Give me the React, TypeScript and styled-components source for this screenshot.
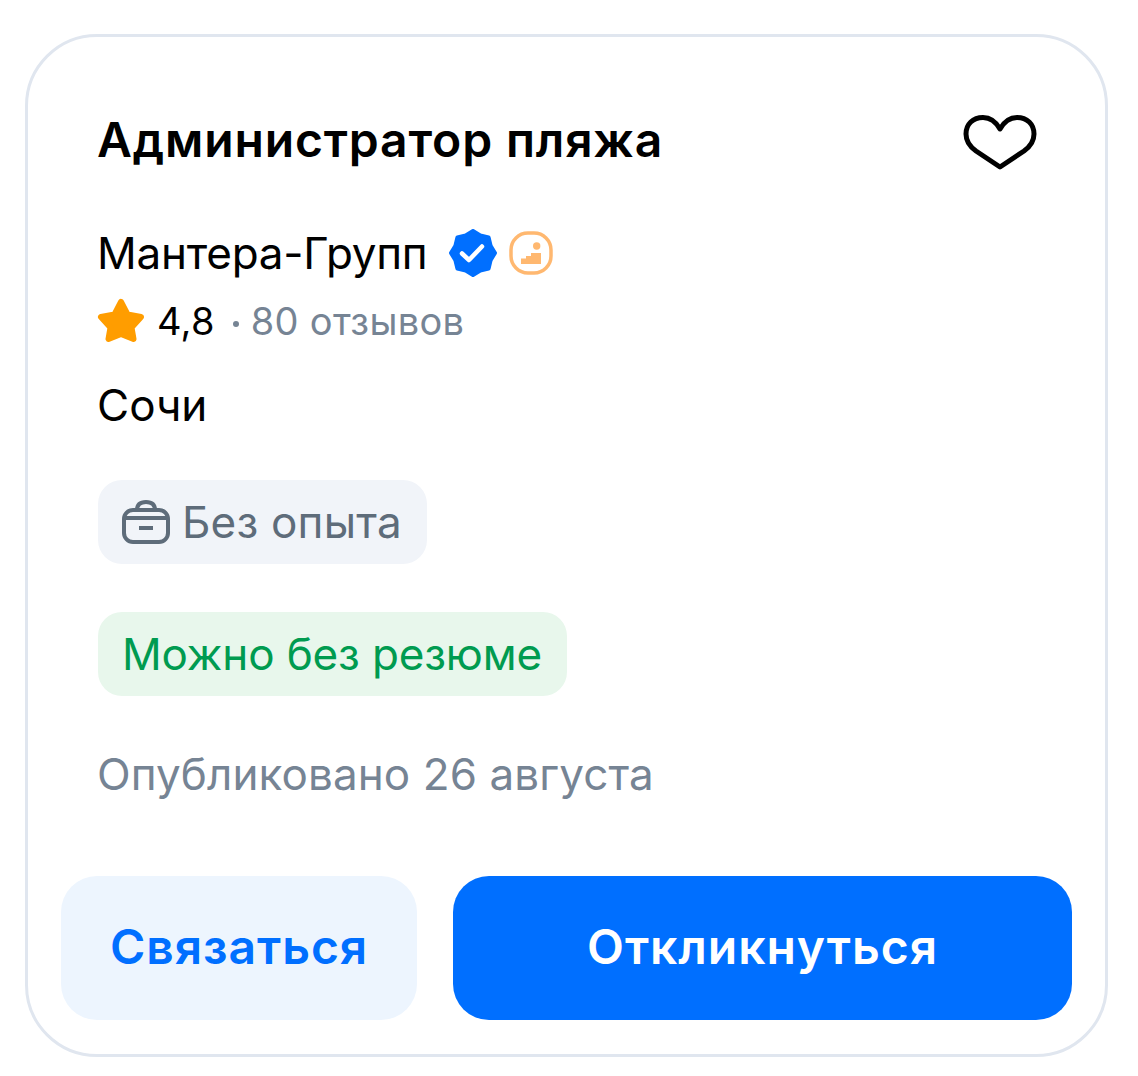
import styled, { createGlobalStyle } from 'styled-components';

const GlobalStyle = createGlobalStyle`
  html, body {
    margin: 0;
    background: #fff;
    font-family: Inter, "Liberation Sans", sans-serif;
  }
`;

const Page = styled.div`
  width: 1138px;
  height: 1076px;
  padding: 34px 0 0 25px;
  box-sizing: border-box;
`;

const Card = styled.article`
  width: 1083px;
  height: 1023px;
  box-sizing: border-box;
  border: 3px solid #e0e6ef;
  border-radius: 72px;
  padding: 71px 33px 34px;
  display: flex;
  flex-direction: column;
  justify-content: space-between;
`;

const Body = styled.div`
  padding: 0 35px 0 37px;
`;

const Header = styled.div`
  display: flex;
  justify-content: space-between;
  align-items: center;
  height: 64px;
`;

const Title = styled.h2`
  margin: 0 0 0 -1px;
  font-size: 48px;
  line-height: 64px;
  font-weight: 600;
  letter-spacing: 0.85px;
  color: #000;
`;

const Heart = styled.svg`
  margin-top: 4px;
`;

const Employer = styled.div`
  display: flex;
  align-items: center;
  margin: 57px 0 0 -1px;
  height: 48px;
  font-size: 44px;
  letter-spacing: -0.25px;
  color: #000;
`;

const Badges = styled.span`
  display: flex;
  align-items: center;
  gap: 12px;
  margin-left: 22px;
`;

const Rating = styled.div`
  display: flex;
  align-items: center;
  margin-top: 22px;
  height: 44px;
  font-size: 38px;
  letter-spacing: 0.3px;
`;

const Star = styled.svg`
  margin-left: -1px;
`;

const Score = styled.span`
  color: #000;
  margin-left: 12px;
`;

const Dot = styled.span`
  width: 6px;
  height: 6px;
  margin: 6px 12px 0 18px;
  border-radius: 50%;
  background: #768494;
`;

const Reviews = styled.span`
  color: #768494;
`;

const City = styled.div`
  margin: 34px 0 0 -1px;
  font-size: 44px;
  line-height: 56px;
  color: #000;
`;

const Tag = styled.div<{ $tone: 'grey' | 'green' }>`
  display: inline-flex;
  align-items: center;
  gap: 12px;
  height: 84px;
  padding: 0 25px 0 24px;
  box-sizing: border-box;
  border-radius: 24px;
  font-size: 44px;
  letter-spacing: ${({ $tone }) => ($tone === 'green' ? '-0.15px' : '0.2px')};
  background: ${({ $tone }) => ($tone === 'green' ? '#e8f7ec' : '#f1f4f9')};
  color: ${({ $tone }) => ($tone === 'green' ? '#009b50' : '#5e6c7a')};
`;

const TagRow = styled.div<{ $top: number }>`
  margin-top: ${({ $top }) => $top}px;
  display: flex;
`;

const Published = styled.div`
  margin: 50px 0 0 -1px;
  font-size: 44px;
  line-height: 56px;
  letter-spacing: 0.09px;
  color: #768494;
`;

const Actions = styled.div`
  display: flex;
  gap: 36px;
`;

const ActionButton = styled.button<{ $primary?: boolean }>`
  height: 144px;
  padding: 0 0 3px;
  border: none;
  border-radius: 36px;
  font-family: inherit;
  font-size: 48px;
  font-weight: 600;
  letter-spacing: 0.95px;
  flex: ${({ $primary }) => ($primary ? '0 0 619px' : '0 0 356px')};
  background: ${({ $primary }) => ($primary ? '#006fff' : '#edf5fe')};
  color: ${({ $primary }) => ($primary ? '#fff' : '#006fff')};
`;

const App = () => (
  <Page>
    <GlobalStyle />
    <Card>
      <Body>
        <Header>
          <Title>Администратор пляжа</Title>
          <Heart width="74" height="56" viewBox="0 0 74 56" fill="none">
            <path
              d="M37 53 L13 37 C6 32 3 27 3 20 C3 10 10 3.5 20 3.5 C27 3.5 33 8 37 15 C41 8 47 3.5 54 3.5 C64 3.5 71 10 71 20 C71 27 68 32 61 37 Z"
              stroke="#000"
              strokeWidth="5"
              strokeLinejoin="round"
            />
          </Heart>
        </Header>
        <Employer>
          Мантера-Групп
          <Badges>
            <svg width="48" height="48" viewBox="0 0 48 48">
              <path
                d="M24 2 L31.3 6.4 L39.6 8.4 L41.6 16.7 L46 24 L41.6 31.3 L39.6 39.6 L31.3 41.6 L24 46 L16.7 41.6 L8.4 39.6 L6.4 31.3 L2 24 L6.4 16.7 L8.4 8.4 L16.7 6.4 Z"
                fill="#006fff"
                stroke="#006fff"
                strokeWidth="4"
                strokeLinejoin="round"
              />
              <path d="M13 24.5 L20 31 L33 17.5" fill="none" stroke="#fff" strokeWidth="4.5" strokeLinecap="round" strokeLinejoin="round" />
            </svg>
            <svg width="44" height="44" viewBox="0 0 44 44">
              <rect x="2" y="2" width="40" height="40" rx="17" fill="none" stroke="#ffb870" strokeWidth="3.5" />
              <circle cx="27.7" cy="15" r="3.7" fill="#ffb870" />
              <path d="M12 33 V27.5 H17 V25 H22 V22 H32 V33 Z" fill="#ffb870" />
            </svg>
          </Badges>
        </Employer>
        <Rating>
          <Star width="48" height="46" viewBox="0 0 48 46">
            <path
              d="M24 4 L30.5 16.5 L44 19 L34.5 29.5 L36.5 41 L24 36 L11.5 41 L13.5 29.5 L4 19 L17.5 16.5 Z"
              fill="#ff9d00"
              stroke="#ff9d00"
              strokeWidth="6"
              strokeLinejoin="round"
            />
          </Star>
          <Score>4,8</Score>
          <Dot />
          <Reviews>80 отзывов</Reviews>
        </Rating>
        <City>Сочи</City>
        <TagRow $top={47}>
          <Tag $tone="grey">
            <svg width="48" height="48" viewBox="0 0 48 48" fill="none" stroke="#5e6c7a" strokeWidth="4">
              <rect x="2" y="12" width="44" height="32" rx="9" />
              <path d="M15 12 C15 6 19 4 24 4 C29 4 33 6 33 12" />
              <path d="M2 20 H46" />
              <path d="M17 30 H31" />
            </svg>
            Без опыта
          </Tag>
        </TagRow>
        <TagRow $top={48}>
          <Tag $tone="green">Можно без резюме</Tag>
        </TagRow>
        <Published>Опубликовано 26 августа</Published>
      </Body>
      <Actions>
        <ActionButton>Связаться</ActionButton>
        <ActionButton $primary>Откликнуться</ActionButton>
      </Actions>
    </Card>
  </Page>
);

export default App;
